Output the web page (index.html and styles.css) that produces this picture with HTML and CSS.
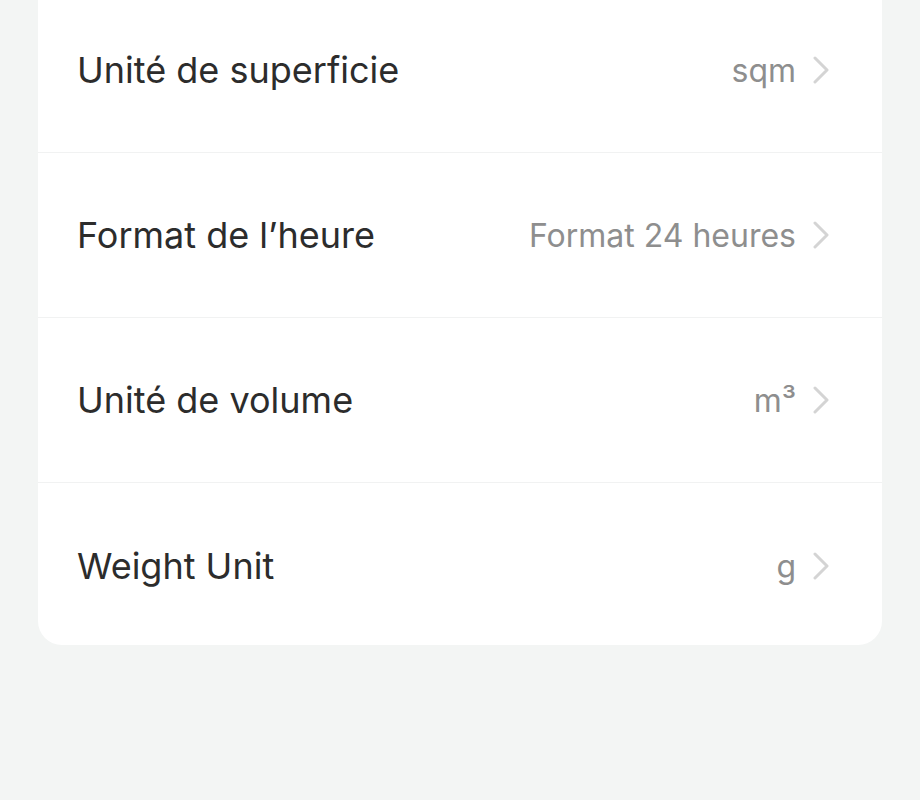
FILE: index.html
```html
<!DOCTYPE html>
<html lang="fr">

<head>
    <meta charset="UTF-8">
    <meta name="viewport" content="width=device-width, initial-scale=1.0">
    <title>Unités</title>
    <link rel="stylesheet" href="styles.css">
</head>

<body>
    <div class="card">
        <div class="row">
            <span class="label">Unité de superficie</span>
            <span class="value">sqm</span>
            <svg class="chevron" viewBox="0 0 18 28"><path d="M3 2 L15 14 L3 26" /></svg>
        </div>
        <div class="row">
            <span class="label">Format de l’heure</span>
            <span class="value">Format 24 heures</span>
            <svg class="chevron" viewBox="0 0 18 28"><path d="M3 2 L15 14 L3 26" /></svg>
        </div>
        <div class="row">
            <span class="label">Unité de volume</span>
            <span class="value">m³</span>
            <svg class="chevron" viewBox="0 0 18 28"><path d="M3 2 L15 14 L3 26" /></svg>
        </div>
        <div class="row">
            <span class="label">Weight Unit</span>
            <span class="value">g</span>
            <svg class="chevron" viewBox="0 0 18 28"><path d="M3 2 L15 14 L3 26" /></svg>
        </div>
    </div>
</body>

</html>
```

FILE: styles.css
```css
* {
    box-sizing: border-box;
}

body {
    background-color: #f3f5f4;
    font-family: Inter, "Noto Sans", sans-serif;
    margin: 0;
    padding: 0 38px;
}

.card {
    background-color: #ffffff;
    border-radius: 0 0 24px 24px;
    margin-top: -12px;
}

.row {
    display: flex;
    align-items: center;
    height: 165px;
    padding: 0 52px 0 39px;
    border-bottom: 1px solid #f1f2f2;
}

.row:last-child {
    border-bottom: none;
    height: 162px;
    padding-top: 4px;
}

.label {
    flex: 1;
    font-size: 36px;
    color: #2c2c2c;
}

.value {
    font-size: 32px;
    color: #8e8e8e;
    margin-right: 16px;
}

.chevron {
    width: 18px;
    height: 28px;
    fill: none;
    stroke: #d4d4d4;
    stroke-width: 3;
    stroke-linecap: round;
    stroke-linejoin: round;
}
```
